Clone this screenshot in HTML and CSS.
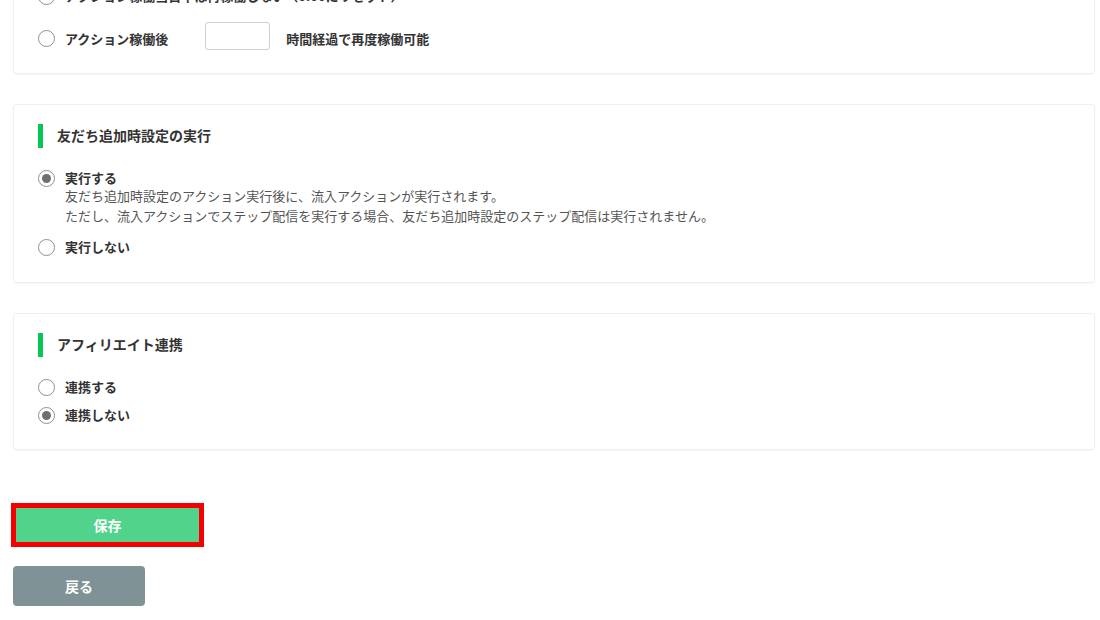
FILE: index.html
```html
<!DOCTYPE html>
<html lang="ja">
  <head>
    <meta charset="UTF-8" />
    <meta name="viewport" content="width=device-width, initial-scale=1.0" />
    <title>流入経路設定</title>
    <link rel="stylesheet" href="styles.css">
  </head>
  <body>
    <div class="page">
      <!-- 稼働制限 -->
      <section class="card">
        <div class="options options-wide">
          <label class="option">
            <input type="radio" name="limit" />
            <span class="option-text">アクション稼働当日中は再稼働しない（0:00にリセット）</span>
          </label>
          <label class="option option-row">
            <input type="radio" name="limit" />
            <span class="option-text option-fixed">アクション稼働後</span>
            <input type="text" class="hour-input" />
            <span class="option-text">時間経過で再度稼働可能</span>
          </label>
        </div>
      </section>

      <!-- 友だち追加時設定 -->
      <section class="card">
        <h2 class="card-title">友だち追加時設定の実行</h2>
        <div class="options">
          <label class="option">
            <input type="radio" name="friend" checked />
            <span class="option-body">
              <span class="option-text">実行する</span>
              <span class="option-desc">友だち追加時設定のアクション実行後に、流入アクションが実行されます。<br />ただし、流入アクションでステップ配信を実行する場合、友だち追加時設定のステップ配信は実行されません。</span>
            </span>
          </label>
          <label class="option">
            <input type="radio" name="friend" />
            <span class="option-text">実行しない</span>
          </label>
        </div>
      </section>

      <!-- アフィリエイト -->
      <section class="card card-last">
        <h2 class="card-title">アフィリエイト連携</h2>
        <div class="options">
          <label class="option">
            <input type="radio" name="affiliate" />
            <span class="option-text">連携する</span>
          </label>
          <label class="option">
            <input type="radio" name="affiliate" checked />
            <span class="option-text">連携しない</span>
          </label>
        </div>
      </section>

      <div class="actions">
        <button class="btn btn-save">保存</button>
        <button class="btn btn-back">戻る</button>
      </div>
    </div>
  </body>
</html>
```

FILE: styles.css
```css
* {
  margin: 0;
  padding: 0;
  box-sizing: border-box;
}

body {
  background: #fff;
  color: #333;
  font-family: "Noto Sans CJK JP", "Noto Sans", sans-serif;
  font-size: 13px;
}

.page {
  margin-top: -33px;
  padding: 0 5px 40px 13px;
}

.card {
  border: 1px solid #efefef;
  border-radius: 3px;
  box-shadow: 0 1px 2px rgba(0, 0, 0, 0.04);
  padding: 19px 24px 26px;
  margin-bottom: 30px;
}

.card:first-child {
  padding-top: 20px;
  padding-bottom: 23px;
}

.card-last {
  padding-bottom: 25px;
}

.card-title {
  border-left: 5px solid #06c755;
  padding-left: 14px;
  font-size: 14px;
  line-height: 23px;
  padding-bottom: 1px;
  font-weight: bold;
  color: #333;
  margin-bottom: 22px;
}

.options {
  display: flex;
  flex-direction: column;
  gap: 11px;
}

.options-wide {
  gap: 17px;
}

.option {
  display: flex;
  align-items: flex-start;
  gap: 10px;
  cursor: pointer;
}

.option-row {
  align-items: center;
  height: 28px;
}

.option input[type="radio"] {
  appearance: none;
  width: 17px;
  height: 17px;
  border: 1px solid #8f8f8f;
  border-radius: 50%;
  background: #fff;
  flex-shrink: 0;
  margin-top: 0;
  position: relative;
}

.option-row input[type="radio"] {
  margin-top: 4px;
}

.option input[type="radio"]:checked::after {
  content: "";
  position: absolute;
  top: 3px;
  left: 3px;
  width: 9px;
  height: 9px;
  border-radius: 50%;
  background: #6f6f6f;
}

.option-body {
  display: flex;
  flex-direction: column;
}

.option-text {
  font-weight: bold;
  line-height: 16px;
  color: #333;
}

.option-row .option-text {
  margin-top: 6px;
}

.option-fixed {
  margin-right: 27px;
}

.option-desc {
  line-height: 20px;
  color: #555;
  margin-bottom: 2px;
}

.hour-input {
  width: 65px;
  height: 28px;
  border: 1px solid #cfcfcf;
  border-radius: 3px;
  margin-right: 6px;
}

.actions {
  display: flex;
  flex-direction: column;
  align-items: flex-start;
  padding-top: 28px;
}

.btn {
  border: none;
  color: #fff;
  font-family: inherit;
  font-size: 14px;
  font-weight: bold;
  cursor: pointer;
}

.btn-save {
  width: 183px;
  height: 34px;
  margin-left: 3px;
  background: #52d38b;
  outline: 5px solid #f50000;
}

.btn-back {
  width: 132px;
  height: 40px;
  margin-top: 24px;
  background: #7f9296;
  border-radius: 4px;
}
```
